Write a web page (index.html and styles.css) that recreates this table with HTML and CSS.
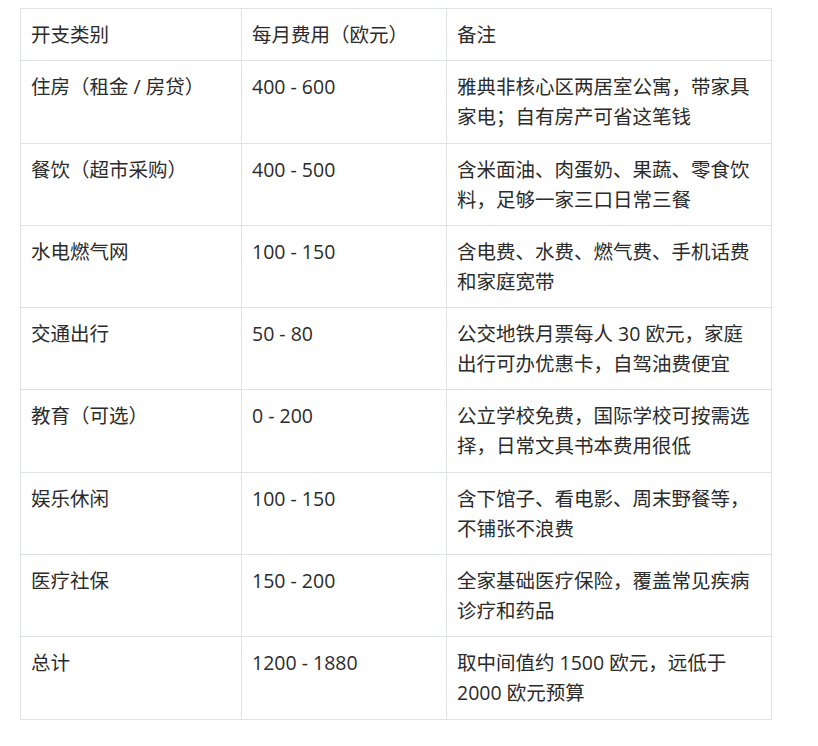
FILE: index.html
```html
<!DOCTYPE html>
<html lang="zh">
<head>
<meta charset="utf-8">
<link rel="stylesheet" href="styles.css">
</head>
<body>
<table class="cost">
  <colgroup>
    <col class="c1"><col class="c2"><col class="c3">
  </colgroup>
  <tr><td>开支类别</td><td>每月费用（欧元）</td><td>备注</td></tr>
  <tr><td>住房（租金 / 房贷）</td><td>400 - 600</td><td>雅典非核心区两居室公寓，带家具家电；自有房产可省这笔钱</td></tr>
  <tr><td>餐饮（超市采购）</td><td>400 - 500</td><td>含米面油、肉蛋奶、果蔬、零食饮料，足够一家三口日常三餐</td></tr>
  <tr><td>水电燃气网</td><td>100 - 150</td><td>含电费、水费、燃气费、手机话费和家庭宽带</td></tr>
  <tr><td>交通出行</td><td>50 - 80</td><td>公交地铁月票每人 30 欧元，家庭出行可办优惠卡，自驾油费便宜</td></tr>
  <tr><td>教育（可选）</td><td>0 - 200</td><td>公立学校免费，国际学校可按需选择，日常文具书本费用很低</td></tr>
  <tr><td>娱乐休闲</td><td>100 - 150</td><td>含下馆子、看电影、周末野餐等，不铺张不浪费</td></tr>
  <tr><td>医疗社保</td><td>150 - 200</td><td>全家基础医疗保险，覆盖常见疾病诊疗和药品</td></tr>
  <tr><td>总计</td><td>1200 - 1880</td><td>取中间值约 1500 欧元，远低于 2000 欧元预算</td></tr>
</table>
</body>
</html>
```

FILE: styles.css
```css
html, body {
  margin: 0;
  padding: 0;
  background: #ffffff;
}
body {
  padding: 8px 0 0 20px;
  font-family: "Open Sans", "Noto Sans CJK SC", sans-serif;
  font-size: 19.5px;
  color: #2b2b2b;
}
.cost {
  border-collapse: collapse;
  table-layout: fixed;
  width: 751px;
}
.c1 { width: 221px; }
.c2 { width: 205px; }
.c3 { width: 325px; }
.cost td {
  border: 1px solid #dfe2e5;
  padding: 11px 10px 10.3px;
  line-height: 30px;
  vertical-align: top;
  text-align: left;
}
```
